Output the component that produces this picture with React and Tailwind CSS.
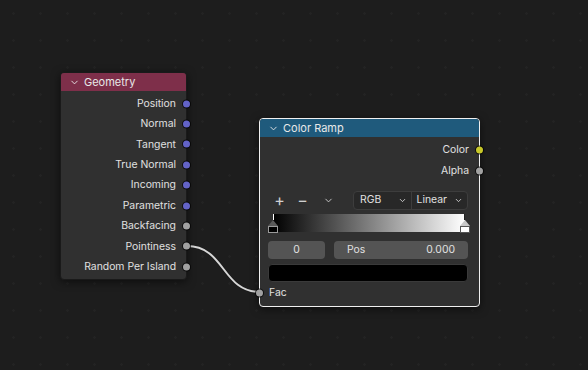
import { ChevronDown } from "lucide-react";

const geoOutputs = [
  { name: "Position", color: "bg-[#6363c7]" },
  { name: "Normal", color: "bg-[#6363c7]" },
  { name: "Tangent", color: "bg-[#6363c7]" },
  { name: "True Normal", color: "bg-[#6363c7]" },
  { name: "Incoming", color: "bg-[#6363c7]" },
  { name: "Parametric", color: "bg-[#6363c7]" },
  { name: "Backfacing", color: "bg-[#a1a1a1]" },
  { name: "Pointiness", color: "bg-[#a1a1a1]" },
  { name: "Random Per Island", color: "bg-[#a1a1a1]" },
];

const Socket = ({ color, className = "" }) => (
  <span
    className={`absolute w-[7px] h-[7px] rounded-full ${color} ring-1 ring-black/70 ${className}`}
  />
);

const OutputRow = ({ name, color }) => (
  <div className="relative flex items-center justify-end h-[20.4px] pr-[10px]">
    <span>{name}</span>
    <Socket color={color} className="right-[-4px] top-1/2 -translate-y-1/2" />
  </div>
);

const Marker = ({ light, className = "" }) => (
  <div className={`absolute top-[6px] flex flex-col items-center ${className}`}>
    <div
      className={`w-0 h-0 border-l-[5px] border-r-[5px] border-b-[6px] border-l-transparent border-r-transparent ${
        light ? "border-b-[#c8c8c8]" : "border-b-[#5a5a5a]"
      }`}
    />
    <div
      className={`w-[10px] h-[7px] border ${
        light ? "bg-white border-[#555]" : "bg-black border-[#9a9a9a]"
      }`}
    />
  </div>
);

const App = () => {
  return (
    <div
      className="relative w-[588px] h-[370px] overflow-hidden bg-[#1d1d1d] bg-[radial-gradient(circle,#232323_1px,transparent_1.5px)] bg-[size:27px_27px] text-[10.4px] text-[#e0e0e0]"
      style={{ fontFamily: "Inter, 'DejaVu Sans', sans-serif" }}
    >
      {/* wire */}
      <svg className="absolute inset-0" width="588" height="370">
        <path
          d="M187 246 C 225 246, 222 292, 260 292"
          fill="none"
          stroke="#1a1a1a"
          strokeWidth="3.5"
        />
        <path
          d="M187 246 C 225 246, 222 292, 260 292"
          fill="none"
          stroke="#d6d6d6"
          strokeWidth="2"
        />
      </svg>

      {/* Geometry node */}
      <div className="absolute left-[60px] top-[72px] w-[127px] h-[208px] rounded-[4px] bg-[#303030] border border-[#1a1a1a] shadow-[0_2px_8px_rgba(0,0,0,0.55)]">
        <div className="flex items-center h-[18px] rounded-t-[3px] bg-[#7e2f4a] pl-[8px] gap-[4px] text-[#e8e8e8] text-[11px]">
          <ChevronDown size={11} strokeWidth={2} />
          <span>Geometry</span>
        </div>
        <div className="pt-[2.5px]">
          {geoOutputs.map((o) => (
            <OutputRow key={o.name} name={o.name} color={o.color} />
          ))}
        </div>
      </div>

      {/* Color Ramp node */}
      <div className="absolute left-[259px] top-[118px] w-[221px] h-[189px] rounded-[4px] bg-[#303030] border border-[#f0f0f0] shadow-[0_2px_8px_rgba(0,0,0,0.55)]">
        <div className="flex items-center h-[18px] rounded-t-[3px] bg-[#1f5a7c] pl-[8px] gap-[4px] text-[#e8e8e8] text-[11px]">
          <ChevronDown size={11} strokeWidth={2} />
          <span>Color Ramp</span>
        </div>
        <div className="pt-[3px]">
          <OutputRow name="Color" color="bg-[#c7c729]" />
          <OutputRow name="Alpha" color="bg-[#a1a1a1]" />
        </div>

        <div className="pl-[8px] pr-[11px] pt-[10px]">
          {/* controls */}
          <div className="flex items-center h-[19px]">
            <div className="flex items-center gap-[10px] pl-[5px] text-[#d0d0d0]">
              <span className="text-[16px] leading-none w-[13px] text-center">+</span>
              <span className="text-[16px] leading-none w-[13px] text-center">−</span>
              <ChevronDown size={11} strokeWidth={2} className="ml-[4px]" />
            </div>
            <div className="ml-auto flex h-[19px] w-[115px] rounded-[4px] border border-[#3d3d3d] bg-[#282828]">
              <div className="flex flex-1 items-center justify-between pl-[6px] pr-[4px] border-r border-[#3d3d3d]">
                <span>RGB</span>
                <ChevronDown size={9} strokeWidth={2.2} />
              </div>
              <div className="flex flex-1 items-center justify-between pl-[5px] pr-[4px]">
                <span>Linear</span>
                <ChevronDown size={9} strokeWidth={2.2} />
              </div>
            </div>
          </div>

          {/* ramp */}
          <div className="relative mt-[4px] h-[20px]">
            <div className="absolute left-[5px] right-[3px] top-0 h-[18px] bg-[linear-gradient(to_right,#000,#fff)]" />
            <div className="absolute left-[5px] top-0 h-[6px] border-l border-dashed border-white" />
            <div className="absolute right-[3px] top-0 h-[6px] border-l border-dashed border-[#222]" />
            <Marker className="left-0" />
            <Marker light className="right-[-2px]" />
          </div>

          {/* fields */}
          <div className="flex gap-[9px] mt-[7px] h-[18px]">
            <div className="flex w-[57px] items-center justify-center rounded-[4px] bg-[#545454]">
              0
            </div>
            <div className="flex flex-1 items-center justify-between rounded-[4px] bg-[#545454] pl-[13px] pr-[13px]">
              <span>Pos</span>
              <span>0.000</span>
            </div>
          </div>

          {/* color swatch */}
          <div className="mt-[5px] h-[18px] rounded-[4px] bg-black border border-[#3a3a3a]" />
        </div>

        {/* input */}
        <div className="relative flex items-center h-[20px] mt-[1px] pl-[9px]">
          <Socket color="bg-[#a1a1a1]" className="left-[-4px] top-1/2 -translate-y-1/2" />
          <span>Fac</span>
        </div>
      </div>
    </div>
  );
};

export default App;
